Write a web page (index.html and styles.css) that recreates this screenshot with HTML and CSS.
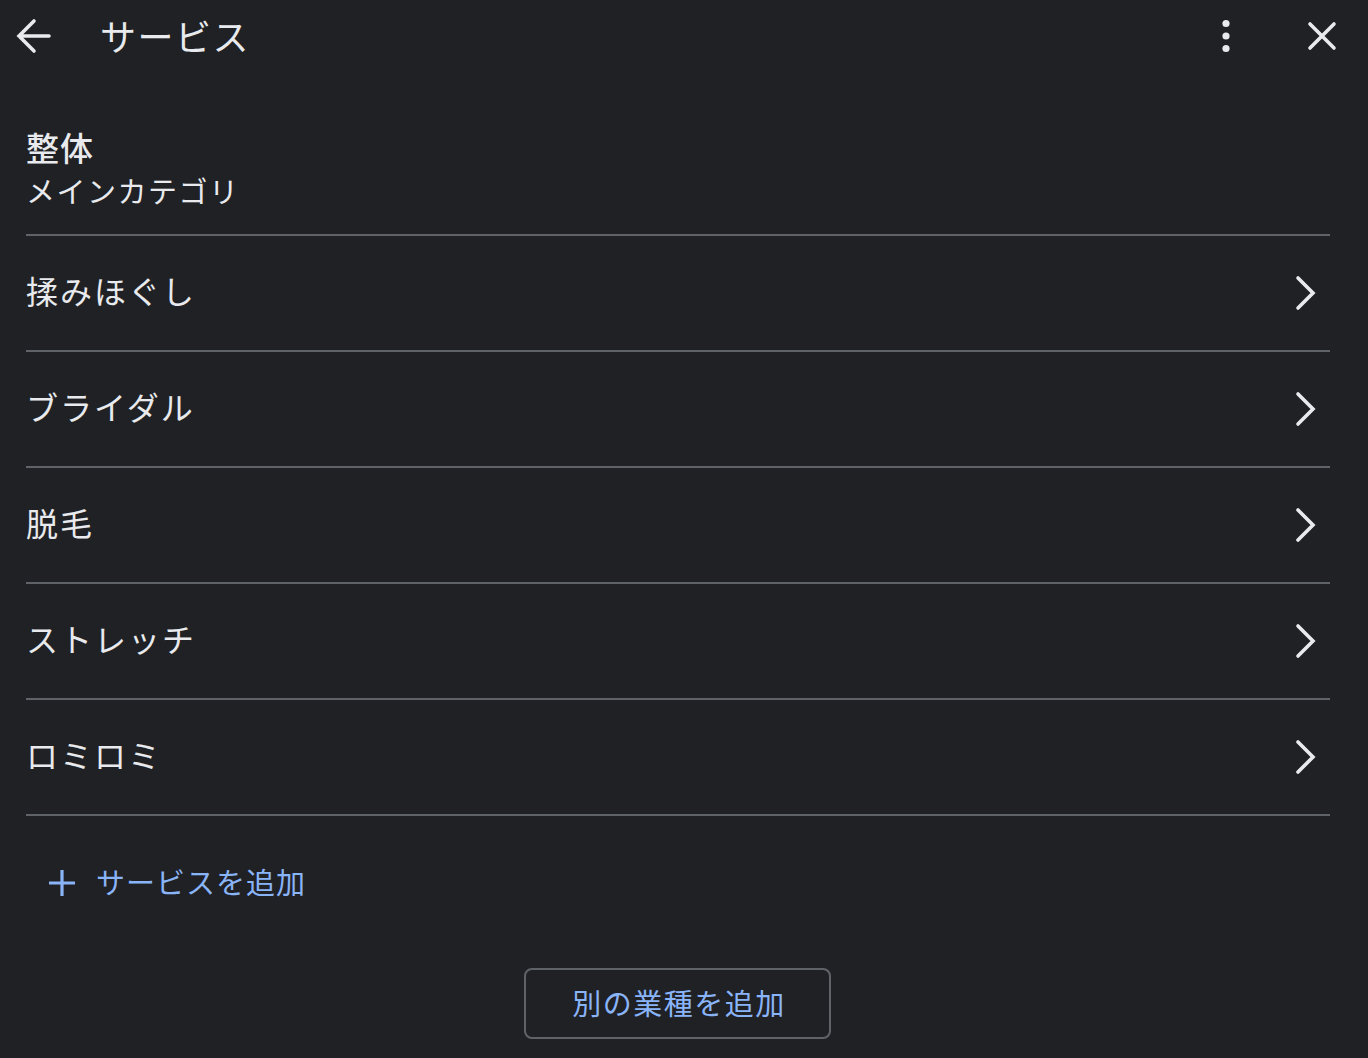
FILE: index.html
```html
<!DOCTYPE html>
<html lang="ja">
<head>
<meta charset="utf-8">
<link rel="stylesheet" href="styles.css">
</head>
<body>
<div class="page">
  <header class="topbar">
    <button class="icon-btn back" aria-label="戻る">
      <svg width="40" height="40" viewBox="0 0 40 40"><path d="M35 20H5M20 5L5 20l15 15" fill="none" stroke="#e8eaed" stroke-width="3.6" stroke-linecap="round" stroke-linejoin="miter"/></svg>
    </button>
    <h1 class="title">サービス</h1>
    <div class="spacer"></div>
    <button class="icon-btn more" aria-label="その他">
      <svg width="40" height="40" viewBox="0 0 40 40"><circle cx="20" cy="7.5" r="3.6" fill="#e8eaed"/><circle cx="20" cy="20" r="3.6" fill="#e8eaed"/><circle cx="20" cy="32.5" r="3.6" fill="#e8eaed"/></svg>
    </button>
    <button class="icon-btn close" aria-label="閉じる">
      <svg width="40" height="40" viewBox="0 0 40 40"><path d="M8 8L32 32M32 8L8 32" fill="none" stroke="#e8eaed" stroke-width="3.6" stroke-linecap="round"/></svg>
    </button>
  </header>

  <main class="content">
    <section class="category">
      <div class="cat-name">整体</div>
      <div class="cat-label">メインカテゴリ</div>
    </section>

    <ul class="services">
      <li class="row"><span class="row-text">揉みほぐし</span><svg class="chev" width="40" height="40" viewBox="0 0 40 40"><path d="M13 5l15 15-15 15" fill="none" stroke="#e8eaed" stroke-width="3.6" stroke-linecap="round"/></svg></li>
      <li class="row"><span class="row-text">ブライダル</span><svg class="chev" width="40" height="40" viewBox="0 0 40 40"><path d="M13 5l15 15-15 15" fill="none" stroke="#e8eaed" stroke-width="3.6" stroke-linecap="round"/></svg></li>
      <li class="row"><span class="row-text">脱毛</span><svg class="chev" width="40" height="40" viewBox="0 0 40 40"><path d="M13 5l15 15-15 15" fill="none" stroke="#e8eaed" stroke-width="3.6" stroke-linecap="round"/></svg></li>
      <li class="row"><span class="row-text">ストレッチ</span><svg class="chev" width="40" height="40" viewBox="0 0 40 40"><path d="M13 5l15 15-15 15" fill="none" stroke="#e8eaed" stroke-width="3.6" stroke-linecap="round"/></svg></li>
      <li class="row"><span class="row-text">ロミロミ</span><svg class="chev" width="40" height="40" viewBox="0 0 40 40"><path d="M13 5l15 15-15 15" fill="none" stroke="#e8eaed" stroke-width="3.6" stroke-linecap="round"/></svg></li>
    </ul>

    <button class="add-service">
      <svg width="40" height="40" viewBox="0 0 40 40"><path d="M20 7v26M7 20h26" fill="none" stroke="#8ab4f8" stroke-width="3.2"/></svg>
      <span>サービスを追加</span>
    </button>

    <div class="footer">
      <button class="outline-btn">別の業種を追加</button>
    </div>
  </main>
</div>
</body>
</html>
```

FILE: styles.css
```css
* { box-sizing: border-box; }
html, body {
  margin: 0;
  padding: 0;
  background: #202124;
}
body {
  font-family: "Noto Sans CJK JP", "Noto Sans", sans-serif;
  color: #e8eaed;
  width: 1368px;
  height: 1058px;
  overflow: hidden;
}
button {
  font-family: inherit;
  background: none;
  border: none;
  padding: 0;
  color: inherit;
  cursor: pointer;
}
.topbar {
  display: flex;
  align-items: center;
  height: 72px;
  padding: 0 26px 0 14px;
}
.icon-btn {
  width: 40px;
  height: 40px;
  display: flex;
  align-items: center;
  justify-content: center;
}
.icon-btn svg { display: block; }
.title {
  margin: 0 0 0 46px;
  font-size: 36px;
  font-weight: 400;
  line-height: 40px;
  letter-spacing: 1.5px;
  padding-bottom: 2px;
}
.spacer { flex: 1; }
.more { margin-right: 56px; }
.content {
  padding: 0 38px 0 26px;
}
.category {
  padding-top: 54px;
  padding-bottom: 22px;
}
.cat-name {
  font-size: 33px;
  font-weight: 500;
  line-height: 42px;
  letter-spacing: 1px;
}
.cat-label {
  font-size: 29px;
  line-height: 44px;
  letter-spacing: 1.5px;
}
.services {
  list-style: none;
  margin: 0;
  padding: 0;
  border-top: 2px solid #5f6368;
}
.row {
  display: flex;
  align-items: center;
  justify-content: space-between;
  height: 116px;
  border-bottom: 2px solid #5f6368;
  padding-right: 5px;
}
.row-text {
  font-size: 32px;
  letter-spacing: 2px;
  padding-bottom: 6px;
}
.add-service {
  display: flex;
  align-items: center;
  gap: 14px;
  margin-top: 44px;
  margin-left: 16px;
  color: #8ab4f8;
  font-size: 29px;
  letter-spacing: 1px;
}
.add-service span { padding-bottom: 4px; }
.footer {
  display: flex;
  justify-content: center;
  margin-top: 62px;
  padding-right: 2px;
}
.outline-btn {
  width: 307px;
  height: 71px;
  border: 2px solid #5f6368;
  border-radius: 8px;
  color: #8ab4f8;
  font-size: 29px;
  letter-spacing: 1.5px;
  padding: 0 0 4px 4px;
}
```
